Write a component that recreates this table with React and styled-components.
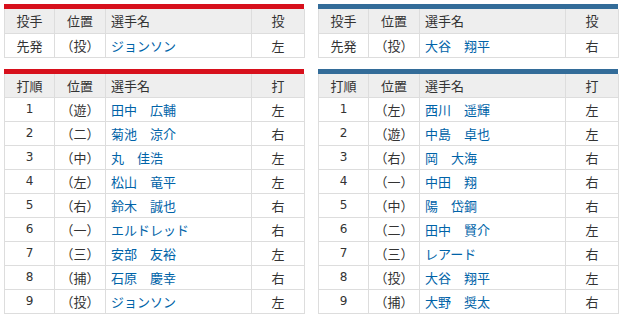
import React from "react";
import styled, { createGlobalStyle } from "styled-components";

const Global = createGlobalStyle`
  body {
    margin: 0;
    background: #fff;
    font-family: "Noto Sans CJK JP", "Noto Sans", sans-serif;
    font-size: 13px;
    color: #333;
  }
`;

const Page = styled.div`
  display: flex;
  gap: 14px;
  padding: 4px;
`;

const Side = styled.div`
  display: flex;
  flex-direction: column;
  gap: 11px;
  width: 300px;
`;

const Panel = styled.div`
  border-top: 5px solid ${(p) => p.color};
`;

const Table = styled.table`
  width: 300px;
  border-collapse: collapse;
  table-layout: fixed;
`;

const Th = styled.th`
  box-sizing: border-box;
  background: #eee;
  font-weight: normal;
  height: 24px;
  padding: 0 5px;
  border: 1px solid #ddd;
  border-top: 0;
  text-align: ${(p) => (p.left ? "left" : "center")};
  width: ${(p) => p.w}px;
  line-height: 23px;
  color: #333;
`;

const Td = styled.td`
  height: 23px;
  padding: 0 5px;
  border: 1px solid #ddd;
  text-align: center;
  line-height: 23px;
  color: #333;
  white-space: nowrap;
`;

const Name = styled(Td)`
  text-align: left;
  color: #0063a8;
`;

const Num = styled(Td)`
  font-family: "DejaVu Sans", sans-serif;
  font-size: 12px;
`;

const Head = ({ a, d }) => (
  <thead>
    <tr>
      <Th w={50}>{a}</Th>
      <Th w={51}>位置</Th>
      <Th w={146} left>選手名</Th>
      <Th w={53}>{d}</Th>
    </tr>
  </thead>
);

const Starter = ({ color, pos, name, hand }) => (
  <Panel color={color}>
    <Table>
      <Head a="投手" d="投" />
      <tbody>
        <tr>
          <Td>先発</Td>
          <Td>（{pos}）</Td>
          <Name>{name}</Name>
          <Td>{hand}</Td>
        </tr>
      </tbody>
    </Table>
  </Panel>
);

const Lineup = ({ color, rows }) => (
  <Panel color={color}>
    <Table>
      <Head a="打順" d="打" />
      <tbody>
        {rows.map(([pos, name, hand], i) => (
          <tr key={i}>
            <Num>{i + 1}</Num>
            <Td>（{pos}）</Td>
            <Name>{name}</Name>
            <Td>{hand}</Td>
          </tr>
        ))}
      </tbody>
    </Table>
  </Panel>
);

const carp = [
  ["遊", "田中　広輔", "左"],
  ["二", "菊池　涼介", "右"],
  ["中", "丸　佳浩", "左"],
  ["左", "松山　竜平", "左"],
  ["右", "鈴木　誠也", "右"],
  ["一", "エルドレッド", "右"],
  ["三", "安部　友裕", "左"],
  ["捕", "石原　慶幸", "右"],
  ["投", "ジョンソン", "左"],
];

const fighters = [
  ["左", "西川　遥輝", "左"],
  ["遊", "中島　卓也", "左"],
  ["右", "岡　大海", "右"],
  ["一", "中田　翔", "右"],
  ["中", "陽　岱鋼", "右"],
  ["二", "田中　賢介", "左"],
  ["三", "レアード", "右"],
  ["投", "大谷　翔平", "左"],
  ["捕", "大野　奨太", "右"],
];

const RED = "#d7101c";
const BLUE = "#336c99";

export default function App() {
  return (
    <>
      <Global />
      <Page>
        <Side>
          <Starter color={RED} pos="投" name="ジョンソン" hand="左" />
          <Lineup color={RED} rows={carp} />
        </Side>
        <Side>
          <Starter color={BLUE} pos="投" name="大谷　翔平" hand="右" />
          <Lineup color={BLUE} rows={fighters} />
        </Side>
      </Page>
    </>
  );
}
